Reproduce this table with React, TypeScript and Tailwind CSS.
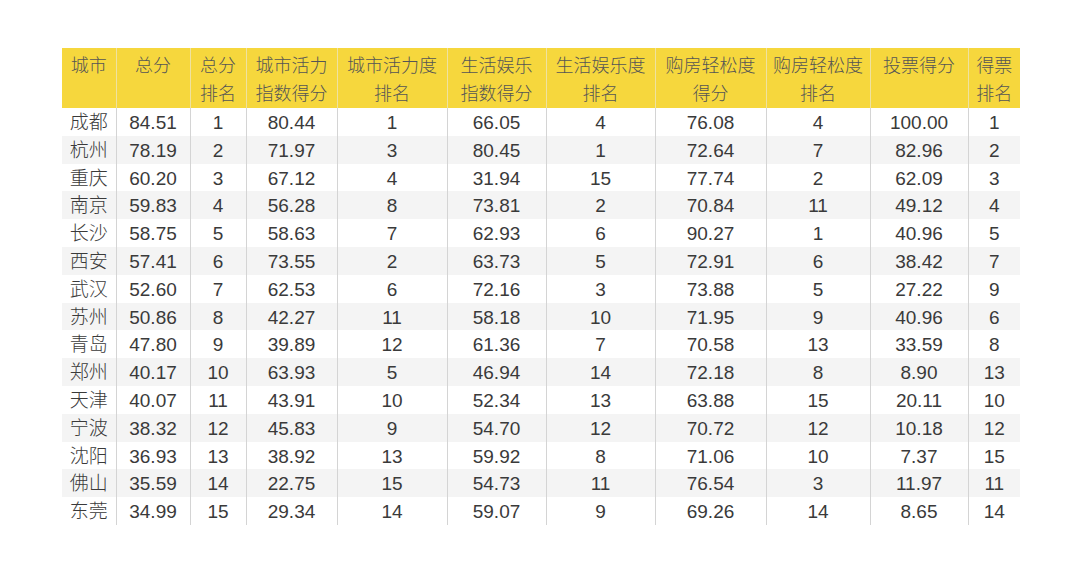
const headers: string[][] = [
  ["城市"],
  ["总分"],
  ["总分", "排名"],
  ["城市活力", "指数得分"],
  ["城市活力度", "排名"],
  ["生活娱乐", "指数得分"],
  ["生活娱乐度", "排名"],
  ["购房轻松度", "得分"],
  ["购房轻松度", "排名"],
  ["投票得分"],
  ["得票", "排名"],
];

const widths = [
  "w-[54px]",
  "w-[74px]",
  "w-[56px]",
  "w-[91px]",
  "w-[110px]",
  "w-[99px]",
  "w-[109px]",
  "w-[111px]",
  "w-[104px]",
  "w-[98px]",
  "w-[52px]",
];

const rows: string[][] = [
  ["成都", "84.51", "1", "80.44", "1", "66.05", "4", "76.08", "4", "100.00", "1"],
  ["杭州", "78.19", "2", "71.97", "3", "80.45", "1", "72.64", "7", "82.96", "2"],
  ["重庆", "60.20", "3", "67.12", "4", "31.94", "15", "77.74", "2", "62.09", "3"],
  ["南京", "59.83", "4", "56.28", "8", "73.81", "2", "70.84", "11", "49.12", "4"],
  ["长沙", "58.75", "5", "58.63", "7", "62.93", "6", "90.27", "1", "40.96", "5"],
  ["西安", "57.41", "6", "73.55", "2", "63.73", "5", "72.91", "6", "38.42", "7"],
  ["武汉", "52.60", "7", "62.53", "6", "72.16", "3", "73.88", "5", "27.22", "9"],
  ["苏州", "50.86", "8", "42.27", "11", "58.18", "10", "71.95", "9", "40.96", "6"],
  ["青岛", "47.80", "9", "39.89", "12", "61.36", "7", "70.58", "13", "33.59", "8"],
  ["郑州", "40.17", "10", "63.93", "5", "46.94", "14", "72.18", "8", "8.90", "13"],
  ["天津", "40.07", "11", "43.91", "10", "52.34", "13", "63.88", "15", "20.11", "10"],
  ["宁波", "38.32", "12", "45.83", "9", "54.70", "12", "70.72", "12", "10.18", "12"],
  ["沈阳", "36.93", "13", "38.92", "13", "59.92", "8", "71.06", "10", "7.37", "15"],
  ["佛山", "35.59", "14", "22.75", "15", "54.73", "11", "76.54", "3", "11.97", "11"],
  ["东莞", "34.99", "15", "29.34", "14", "59.07", "9", "69.26", "14", "8.65", "14"],
];

export default function App() {
  return (
    <div className="w-[1077px] h-[562px] bg-white pt-[48px] pl-[62px] font-['Liberation_Sans','Noto_Sans_CJK_SC',sans-serif] text-[#3a3a3a]">
      <table className="border-collapse table-fixed w-[958px]">
        <thead>
          <tr className="bg-[#f6d73d] text-[#555] h-[59px] text-[18px]">
            {headers.map((h, i) => (
              <th
                key={i}
                className={`${widths[i]} p-0 align-top font-light leading-[28px] pt-[4px] ${
                  i > 0 ? "border-l border-[#efe2a0]" : ""
                }`}
              >
                {h.map((line) => (
                  <div key={line}>{line}</div>
                ))}
              </th>
            ))}
          </tr>
        </thead>
        <tbody className="text-[19px]">
          {rows.map((r, ri) => (
            <tr key={r[0]} className={`h-[27.8px] ${ri % 2 === 1 ? "bg-[#f4f4f4]" : "bg-white"}`}>
              {r.map((c, ci) => (
                <td
                  key={ci}
                  className={`px-0 pt-[3px] pb-0 text-center font-light leading-[24.8px] ${
                    ci > 0 ? "border-l border-[#d4d4d4]" : ""
                  }`}
                >
                  {c}
                </td>
              ))}
            </tr>
          ))}
        </tbody>
      </table>
    </div>
  );
}
